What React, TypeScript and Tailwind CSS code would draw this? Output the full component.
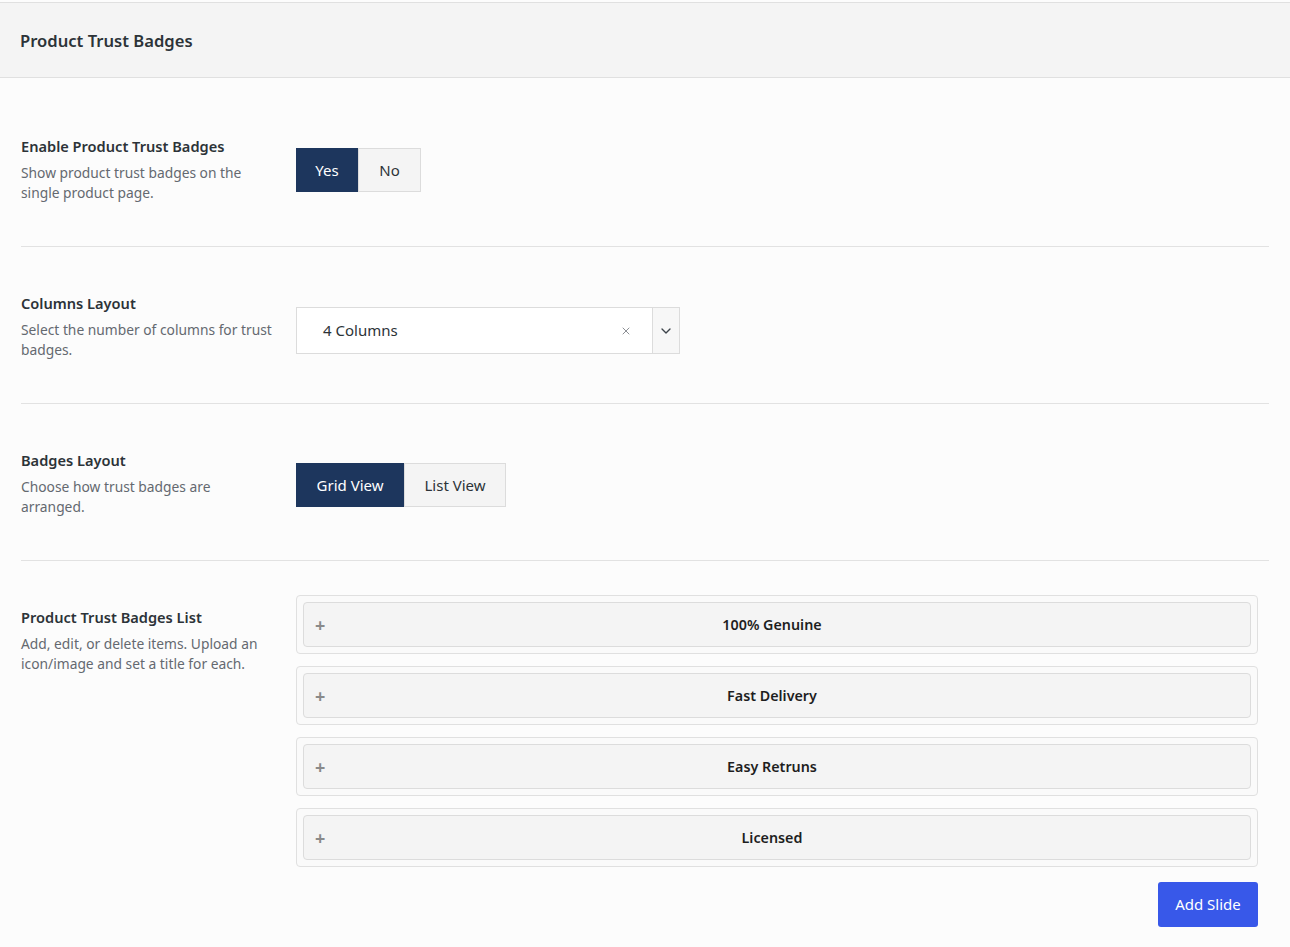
import { ChevronDown, X } from "lucide-react";

// Settings panel: Product Trust Badges (one header, four option rows).

const FONT = "font-['Segoe_UI','Noto_Sans','Liberation_Sans',sans-serif]";

const BADGES = ["100% Genuine", "Fast Delivery", "Easy Retruns", "Licensed"];

function Row({
  title,
  desc,
  last,
  children,
}: {
  title: string;
  desc: string;
  last?: boolean;
  children: React.ReactNode;
}) {
  return (
    <div
      className={
        "flex pt-[45px] pb-[43px] " + (last ? "" : "border-b border-[#e2e2e2]")
      }
    >
      <div className="w-[275px] shrink-0 pr-[21px]">
        <h3 className="text-[14.6px] font-semibold leading-[22px] text-[#2c3338]">
          {title}
        </h3>
        <p className="mt-[6px] text-[13.8px] leading-[20px] text-[#646970]">
          {desc}
        </p>
      </div>
      <div className="flex-1">{children}</div>
    </div>
  );
}

function Toggle({
  options,
  active,
  widths,
}: {
  options: string[];
  active: number;
  widths: string[];
}) {
  return (
    <div className="flex">
      {options.map((o, i) => (
        <button
          key={o}
          className={
            "flex h-[44px] items-center justify-center text-[15px] " +
            widths[i] +
            (i === active
              ? " bg-[#1d365d] text-white"
              : " border border-[#dcdcdc] bg-[#f4f4f4] text-[#2c3338]")
          }
        >
          {o}
        </button>
      ))}
    </div>
  );
}

export default function App() {
  return (
    <div className={`min-h-screen bg-[#fcfcfc] pt-[2px] ${FONT}`}>
      <header className="flex h-[76px] items-center border-y border-[#e0e0e0] bg-[#f4f4f4] px-5 pt-[2px]">
        <h2 className="text-[16.6px] font-semibold text-[#2c3338]">
          Product Trust Badges
        </h2>
      </header>

      <div className="px-[21px] pt-[12px]">
        <Row
          title="Enable Product Trust Badges"
          desc="Show product trust badges on the single product page."
        >
          <div className="mt-[13px]">
            <Toggle options={["Yes", "No"]} active={0} widths={["w-[62px]", "w-[63px]"]} />
          </div>
        </Row>

        <Row
          title="Columns Layout"
          desc="Select the number of columns for trust badges."
        >
          <div className="mt-[15px] flex h-[47px] w-[384px] border border-[#dcdcdc] bg-white">
            <div className="flex flex-1 items-center pl-[26px] pr-[20px] text-[15px] text-[#2c3338]">
              <span className="flex-1">4 Columns</span>
              <X size={12} strokeWidth={2} className="text-[#8c8f94]" />
            </div>
            <div className="flex w-[27px] items-center justify-center border-l border-[#dcdcdc] bg-[#f7f7f7]">
              <ChevronDown size={16} strokeWidth={2} className="text-[#3c434a]" />
            </div>
          </div>
        </Row>

        <Row
          title="Badges Layout"
          desc="Choose how trust badges are arranged."
        >
          <div className="mt-[14px]">
            <Toggle
              options={["Grid View", "List View"]}
              active={0}
              widths={["w-[108px]", "w-[102px]"]}
            />
          </div>
        </Row>

        <Row
          title="Product Trust Badges List"
          desc="Add, edit, or delete items. Upload an icon/image and set a title for each."
          last
        >
          <div className="-mt-[11px] w-[962px]">
            <div className="flex flex-col gap-[12px]">
              {BADGES.map((b) => (
                <div
                  key={b}
                  className="rounded-[4px] border border-[#e0e0e0] bg-[#fafafa] p-[6px]"
                >
                  <div className="flex h-[45px] items-center rounded-[4px] border border-[#dcdcdc] bg-[#f4f4f4] pl-[11px]">
                    <span className="w-[16px] text-[18px] font-bold leading-none text-[#8a8a8a]">
                      +
                    </span>
                    <span className="flex-1 pr-[37px] text-center text-[14.3px] font-semibold text-[#1e1e1e]">
                      {b}
                    </span>
                  </div>
                </div>
              ))}
            </div>
            <div className="mt-[15px] flex justify-end">
              <button className="h-[45px] w-[100px] rounded-[3px] bg-[#3858e9] text-[15px] text-white">
                Add Slide
              </button>
            </div>
          </div>
        </Row>
      </div>
    </div>
  );
}
